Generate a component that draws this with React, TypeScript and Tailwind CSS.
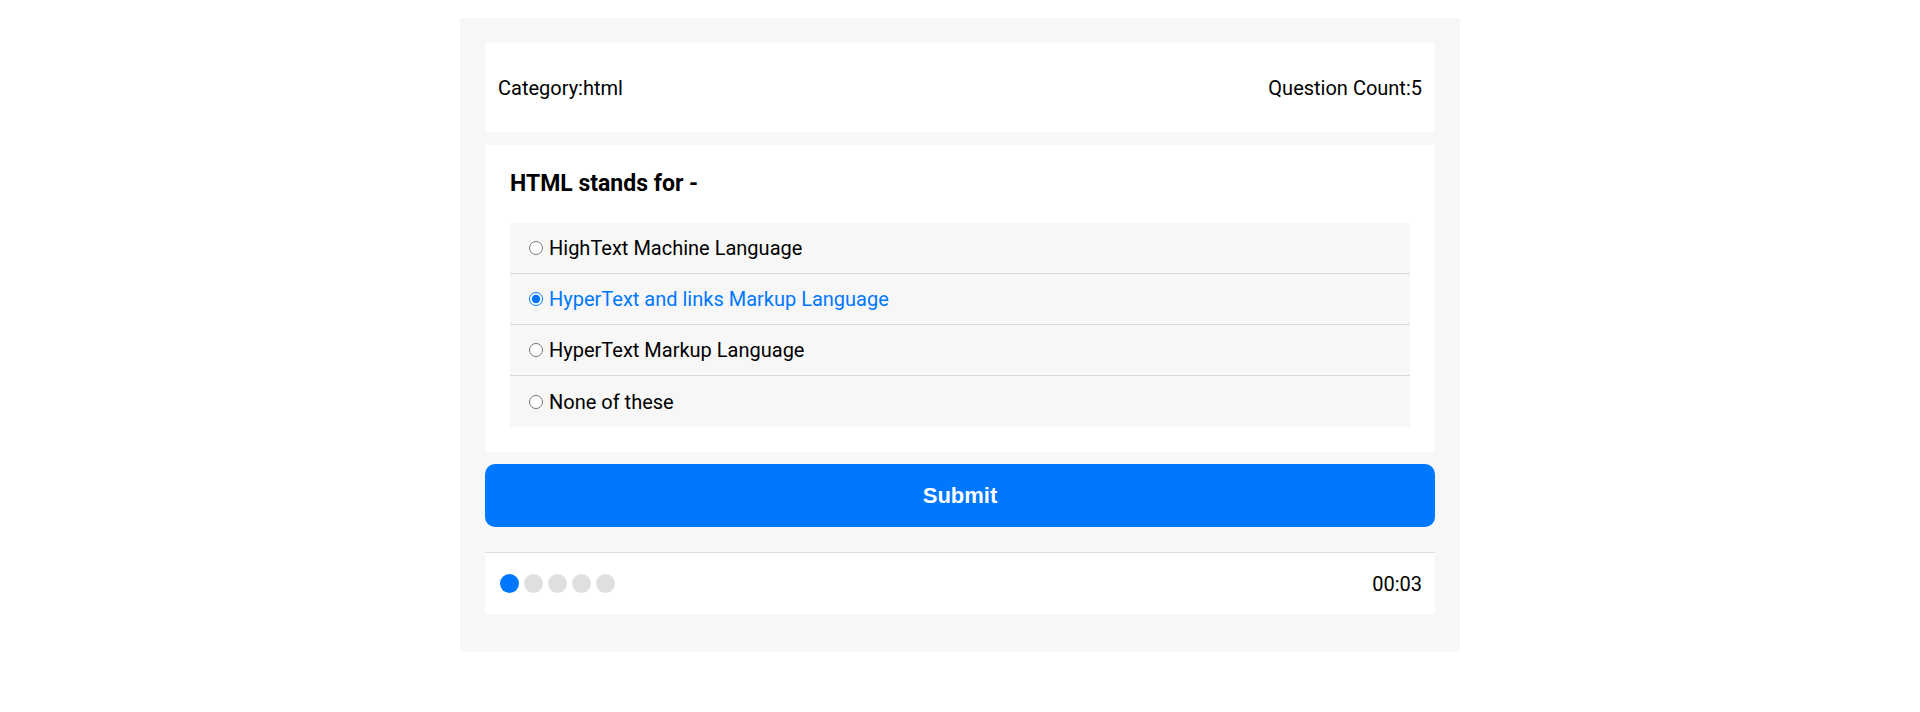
import { useState } from "react";

const options = [
  "HighText Machine Language",
  "HyperText and links Markup Language",
  "HyperText Markup Language",
  "None of these",
];

const App = () => {
  const [selected, setSelected] = useState(1);
  const total = 5;
  const current = 0;

  return (
    <div className="min-h-screen bg-white font-['Roboto',sans-serif] text-black">
      <div className="mx-auto mt-[18px] w-[1000px] bg-[#f7f7f7] px-[25px] pt-[25px] pb-[38px]">
        {/* Header */}
        <div className="flex h-[89px] items-center justify-between bg-white px-[13px] text-[20px]">
          <span>Category:html</span>
          <span>Question Count:5</span>
        </div>

        {/* Question */}
        <div className="mt-[13px] bg-white p-[25px]">
          <h2 className="text-[23px] font-bold leading-[27px]">HTML stands for -</h2>
          <div className="mt-[26px] bg-[#f7f7f7]">
            {options.map((option, index) => (
              <label
                key={option}
                className="flex h-[51px] cursor-pointer items-center border-b border-[#d9d9d9] pl-[19px] text-[20px] last:border-b-0"
                style={{ color: selected === index ? "#0077ff" : "#000" }}
              >
                <input
                  type="radio"
                  name="answer"
                  className="m-0 h-[14px] w-[14px]"
                  checked={selected === index}
                  onChange={() => setSelected(index)}
                />
                <span className="ml-[6px]">{option}</span>
              </label>
            ))}
          </div>
        </div>

        {/* Submit */}
        <button className="mt-[12px] flex h-[63px] w-full items-center justify-center rounded-[10px] bg-[#0077ff] font-['Liberation_Sans',Arial,sans-serif] text-[22px] font-bold text-white">
          Submit
        </button>

        {/* Progress and timer */}
        <div className="mt-[25px] flex h-[62px] items-center justify-between border-t border-[#dddddd] bg-white pl-[15px] pr-[13px]">
          <div className="flex gap-[5px]">
            {Array.from({ length: total }).map((_, i) => (
              <span
                key={i}
                className={i === current ? "h-[19px] w-[19px] rounded-full bg-[#0077ff]" : "h-[19px] w-[19px] rounded-full bg-[#dfdfdf]"}
              />
            ))}
          </div>
          <span className="text-[20px]">00:03</span>
        </div>
      </div>
    </div>
  );
};

export default App;
